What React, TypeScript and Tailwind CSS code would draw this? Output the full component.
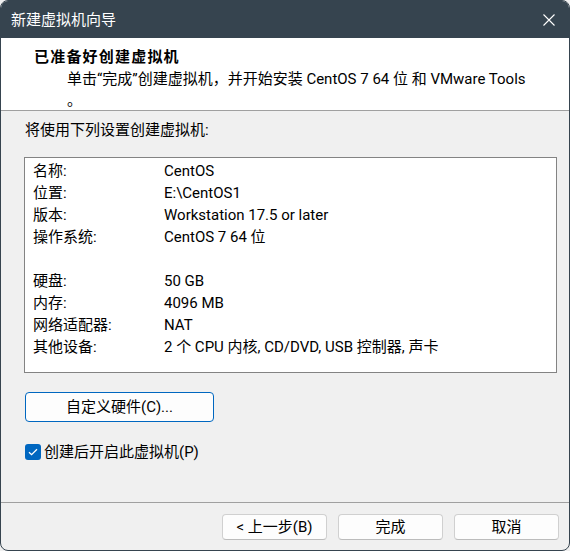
import React from "react";

const rows: [string, string][] = [
  ["名称:", "CentOS"],
  ["位置:", "E:\\CentOS1"],
  ["版本:", "Workstation 17.5 or later"],
  ["操作系统:", "CentOS 7 64 位"],
  ["", ""],
  ["硬盘:", "50 GB"],
  ["内存:", "4096 MB"],
  ["网络适配器:", "NAT"],
  ["其他设备:", "2 个 CPU 内核, CD/DVD, USB 控制器, 声卡"],
];

export default function App() {
  return (
    <div className="w-[570px] h-[551px] bg-[#f0f0f0] font-['Segoe_UI','Roboto','Noto_Sans_CJK_SC',sans-serif] text-[15px] text-black">
      <div className="h-full flex flex-col rounded-[8px] border border-[#36444f] overflow-hidden bg-[#f0f0f0]">
        {/* title bar */}
        <div className="h-[37px] shrink-0 bg-[#36444f] flex items-center justify-between pl-[10px] pr-[14px]">
          <span className="text-white text-[15px] leading-[20px]">新建虚拟机向导</span>
          <svg width="12" height="12" viewBox="0 0 12 12" className="block">
            <path d="M0.5 0.5 L11.5 11.5 M11.5 0.5 L0.5 11.5" stroke="white" strokeWidth="1.1" fill="none" />
          </svg>
        </div>
        {/* header */}
        <div className="h-[73px] shrink-0 bg-white border-b border-[#a0a0a0] pt-[9px] overflow-hidden">
          <div className="pl-[33px] font-bold leading-[21px] tracking-[1.2px]">已准备好创建虚拟机</div>
          <div className="pl-[66px] leading-[22px] whitespace-nowrap">
            单击“完成”创建虚拟机，并开始安装 CentOS 7 64 位 和 VMware Tools
          </div>
          <div className="pl-[66px] leading-[20px]">。</div>
        </div>
        {/* body */}
        <div className="flex-1 flex flex-col pl-[23px]">
          <div className="pt-[8px] pl-[1px] leading-[22px]">将使用下列设置创建虚拟机:</div>
          <div className="mt-[16px] w-[533px] h-[216px] bg-white border border-[#838383] pt-[2px] pl-[8px]">
            {rows.map(([k, v], i) => (
              <div key={i} className="flex h-[22px] leading-[22px]">
                <div className="w-[131px] shrink-0">{k}</div>
                <div className="whitespace-nowrap">{v}</div>
              </div>
            ))}
          </div>
          <button className="mt-[19px] ml-[1px] w-[189px] h-[30px] bg-[#fdfdfd] border border-[#0067c0] rounded-[4px] flex items-center justify-center leading-[20px]">
            自定义硬件(C)...
          </button>
          <div className="mt-[22px] ml-[1px] flex items-center h-[16px]">
            <div className="w-[16px] h-[16px] rounded-[3px] bg-[#0067c0] flex items-center justify-center">
              <svg width="10" height="8" viewBox="0 0 10 8">
                <path d="M1 4.2 L3.6 6.7 L9 1.2" stroke="white" strokeWidth="1.3" fill="none" />
              </svg>
            </div>
            <span className="ml-[3px] leading-[20px]">创建后开启此虚拟机(P)</span>
          </div>
        </div>
        {/* footer */}
        <div className="shrink-0 border-t border-[#a0a0a0] pt-[11px] pb-[10px] pr-[10px] flex justify-end gap-[11px]">
          {["< 上一步(B)", "完成", "取消"].map((t) => (
            <button
              key={t}
              className="w-[105px] h-[26px] bg-[#fdfdfd] border border-[#d0d0d0] border-b-[#bcbcbc] rounded-[4px] flex items-center justify-center leading-[20px]"
            >
              {t}
            </button>
          ))}
        </div>
      </div>
    </div>
  );
}
